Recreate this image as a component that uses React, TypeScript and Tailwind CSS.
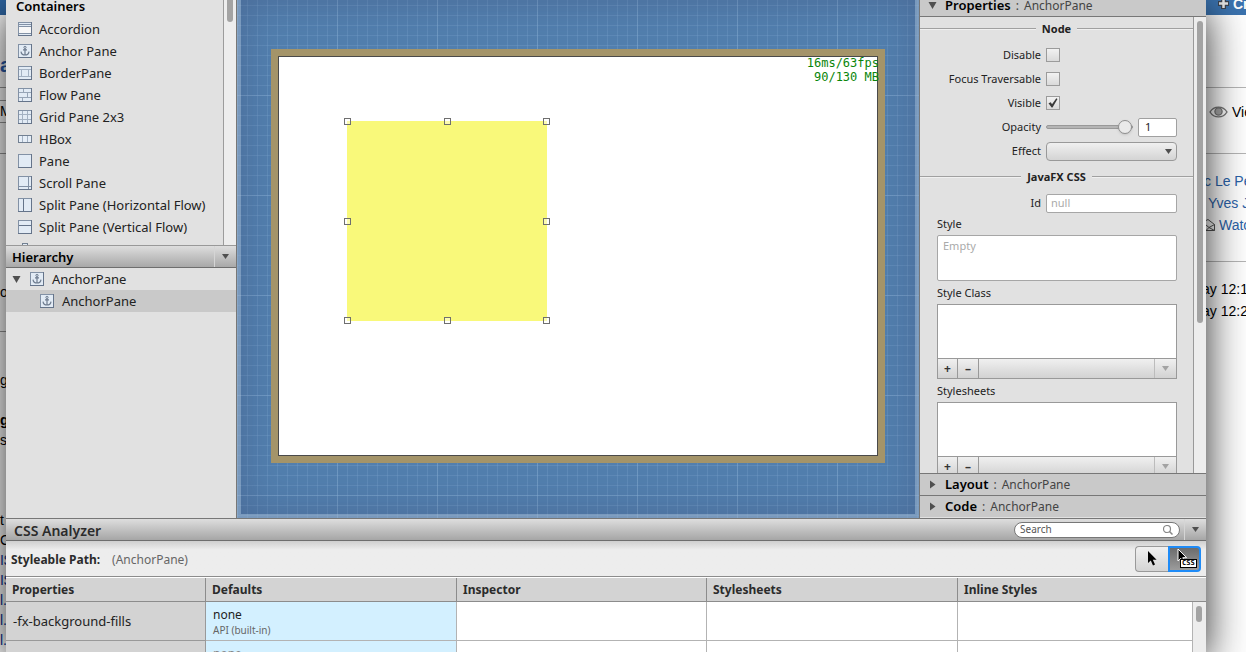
import { useState } from "react";
import type { ReactNode } from "react";

const CONTAINERS: { name: string; icon: string }[] = [
  { name: "Accordion", icon: "accordion" },
  { name: "Anchor Pane", icon: "anchor" },
  { name: "BorderPane", icon: "border" },
  { name: "Flow Pane", icon: "flow" },
  { name: "Grid Pane 2x3", icon: "grid" },
  { name: "HBox", icon: "hbox" },
  { name: "Pane", icon: "pane" },
  { name: "Scroll Pane", icon: "scroll" },
  { name: "Split Pane (Horizontal Flow)", icon: "splith" },
  { name: "Split Pane (Vertical Flow)", icon: "splitv" },
];

function PaneIcon({ kind }: { kind: string }) {
  if (kind === "hbox") {
    return (
      <svg width="14" height="14" viewBox="0 0 14 14" shapeRendering="crispEdges" className="shrink-0">
        <rect x="0.5" y="3.5" width="13" height="7" fill="#e6eef7" stroke="#728092" />
        <path d="M4.5 4v6M9.5 4v6" stroke="#a3b1c2" />
      </svg>
    );
  }
  return (
    <svg width="14" height="14" viewBox="0 0 14 14" shapeRendering="crispEdges" className="shrink-0">
      <rect x="0.5" y="0.5" width="13" height="13" fill="#e2ebf5" stroke="#8291a5" />
      <path d="M0 13.5h14M13.5 0v14" stroke="#65748a" />
      {kind === "accordion" && (
        <g>
          <path d="M1 2.5h12M1 4.5h12M1 11.5h12" stroke="#8291a5" />
          <path d="M1 5h12v6H1z" fill="#f7f7f7" />
        </g>
      )}
      {kind === "anchor" && (
        <g shapeRendering="auto" fill="none" stroke="#6d7b8e">
          <circle cx="7" cy="3.4" r="1.1" />
          <path d="M7 4.5v6.5M5 5.8h4M3 7.6c.3 2.2 1.8 3.4 4 3.4s3.7-1.2 4-3.4" strokeWidth="1.2" />
        </g>
      )}
      {kind === "border" && <path d="M1 3.5h12M1 10.5h12M3.5 4v6M10.5 4v6" stroke="#a3b1c2" />}
      {kind === "flow" && <path d="M1 4.5h12M1 9.5h12M5.5 1v3M9.5 5v4M4.5 10v3" stroke="#97a5b7" />}
      {kind === "grid" && <path d="M1 4.5h12M1 9.5h12M4.5 1v12M9.5 1v12" stroke="#a3b1c2" />}
      {kind === "scroll" && <path d="M1 10.5h12M10.5 1v12" stroke="#8291a5" />}
      {kind === "splith" && <path d="M5.5 1v12" stroke="#65748a" />}
      {kind === "splitv" && <path d="M1 5.5h12" stroke="#65748a" />}
    </svg>
  );
}

function Triangle({ dir = "down" }: { dir?: "down" | "right" }) {
  return (
    <svg width="9" height="9" viewBox="0 0 9 9" className="shrink-0" aria-hidden="true">
      <path d={dir === "down" ? "M0.5 1h8L4.5 8z" : "M2 0.5v8L7.5 4.5z"} fill="#4f4f4f" />
    </svg>
  );
}

function SmallTriangle({ tone = "dark" }: { tone?: "dark" | "light" }) {
  return (
    <svg width="7" height="5" viewBox="0 0 7 5" className="shrink-0" aria-hidden="true">
      <path d="M0 0h7L3.5 5z" fill={tone === "dark" ? "#4f4f4f" : "#a3a3a3"} />
    </svg>
  );
}

function BackdropLeft() {
  return (
    <div className="flex w-1.5 shrink-0 flex-col overflow-hidden bg-white font-['Liberation_Sans'] text-sm leading-5 whitespace-nowrap text-black" aria-hidden="true">
      <div className="h-[15px] shrink-0 bg-[#2f66a3]" />
      <div className="h-[73px] shrink-0 border-b border-[#999] pt-9 text-xl font-bold text-[#2a5db0]">a</div>
      <div className="h-[13px] shrink-0 border-b border-[#999]" />
      <div className="h-[22px] shrink-0 border-b border-[#999]">M</div>
      <div className="h-[31px] shrink-0 border-b border-[#999]" />
      <div className="h-[178px] shrink-0 border-b border-[#999] pt-32">ov</div>
      <div className="mt-[38px]">g</div>
      <div className="mt-5 font-bold">ge</div>
      <div>s</div>
      <div className="mt-[60px]">t</div>
      <div>C</div>
      <div className="text-[#0a2f8f]">I$</div>
      <div className="text-[#0a2f8f]">I$</div>
      <div className="text-[#0a2f8f]">l.</div>
      <div className="text-[#0a2f8f]">l.</div>
      <div className="text-[#0a2f8f]">l.</div>
    </div>
  );
}

function BackdropRight() {
  return (
    <div className="flex w-10 shrink-0 flex-col overflow-hidden bg-white font-['Liberation_Sans'] text-sm leading-[22px] whitespace-nowrap text-[#2b62a8]">
      <div className="flex h-[15px] shrink-0 items-end gap-1 overflow-hidden bg-[#3b73af] pl-3 text-white">
        <svg width="11" height="15" viewBox="0 0 11 15" className="shrink-0">
          <path d="M5.500 -2v11M0 3.500h11" stroke="#3d4450" strokeWidth="5" />
          <path d="M5.500 -2v10M1 3.500h9" stroke="#e8e8e8" strokeWidth="2.500" />
        </svg>
        <span className="font-bold">Cr</span>
      </div>
      <div className="h-[73px] shrink-0 border-b border-[#b5b5b5]" />
      <div className="flex h-[66px] shrink-0 gap-1 border-b border-[#b5b5b5] pt-[13px] pl-[3px] text-black">
        <svg width="19" height="22" viewBox="0 0 19 22" fill="none" className="shrink-0">
          <path d="M1 11c4-6.500 13-6.500 17 0c-4 6.500-13 6.500-17 0z" stroke="#777" strokeWidth="1.400" />
          <circle cx="9.500" cy="10.500" r="3.600" fill="#aaa" stroke="#777" strokeWidth="1.300" />
        </svg>
        <span>Vie</span>
      </div>
      <div className="h-[108px] shrink-0 border-b border-[#b5b5b5] pt-4">
        <div className="-ml-0.5">c Le Pe</div>
        <div className="pl-0.5">Yves J</div>
        <div className="flex gap-1">
          <svg width="9" height="22" viewBox="0 0 9 22" fill="none" stroke="#555" className="shrink-0">
            <path d="M0 6.500L2 5.500L8.500 10.500V16.500H0M0 11l3 2.500l5.500-3M3 13.500l5.500 3M0 16.500l3-3" />
          </svg>
          Watc
        </div>
      </div>
      <div className="-ml-1 pt-4 text-black">
        <div>ay 12:1</div>
        <div>ay 12:2</div>
      </div>
    </div>
  );
}

function Library() {
  return (
    <section className="flex h-[245px] shrink-0">
      <div className="min-w-0 flex-1 overflow-hidden border-r border-[#9c9c9c] pl-3">
        <h2 className="-ml-0.5 h-[18px] text-[13px] leading-3 font-semibold text-black">Containers</h2>
        <ul>
          {CONTAINERS.map((c) => (
            <li key={c.name} className="flex h-[22px] items-center gap-[7px] whitespace-nowrap">
              <PaneIcon kind={c.icon} />
              <span className="pt-0.5">{c.name}</span>
            </li>
          ))}
          <li className="flex h-[22px] justify-start pt-[5px] pl-1">
            <span className="h-2 w-1.5 border border-[#728092] bg-[#e2ebf5]" />
          </li>
        </ul>
      </div>
      <div className="w-3 shrink-0 bg-[#ededed] pl-[3px]">
        <div className="h-[22px] w-1.5 rounded-b-[3px] bg-[#a3a3a3]" />
      </div>
    </section>
  );
}

function Hierarchy() {
  return (
    <section className="flex flex-1 flex-col">
      <header className="flex h-[23px] items-stretch border-y border-t-[#999] border-b-[#6e6e6e] bg-linear-to-b from-[#dedede] to-[#a8a8a8]">
        <h2 className="flex-1 pl-1.5 text-[13px] leading-[22px] font-semibold text-black">Hierarchy</h2>
        <button type="button" aria-label="Hierarchy options" className="flex w-[22px] items-center justify-center border-l border-[#d5d5d5]">
          <SmallTriangle />
        </button>
      </header>
      <ul>
        <li className="flex h-[22px] items-center pl-1.5">
          <Triangle />
          <span className="ml-[9px] flex items-center gap-2">
            <PaneIcon kind="anchor" />
            <span className="pt-0.5">AnchorPane</span>
          </span>
        </li>
        <li className="flex h-[22px] items-center gap-2 bg-[#c9c9c9] pl-[34px]">
          <PaneIcon kind="anchor" />
          <span className="pt-0.5">AnchorPane</span>
        </li>
      </ul>
    </section>
  );
}

function Handle({ place }: { place: string }) {
  return <span className={"absolute size-[7px] border border-[#6f6f6f] bg-white/40 " + place} />;
}

function Canvas() {
  return (
    <main className="relative flex min-w-0 flex-1 items-start justify-center overflow-hidden bg-[#527fae] bg-[linear-gradient(to_right,rgba(150,185,220,.28)_1px,transparent_1px),linear-gradient(to_bottom,rgba(150,185,220,.28)_1px,transparent_1px),linear-gradient(to_right,rgba(130,170,210,.26)_1px,transparent_1px),linear-gradient(to_bottom,rgba(130,170,210,.26)_1px,transparent_1px)] bg-[size:100px_100px,100px_100px,10px_10px,10px_10px] bg-[position:0_95px,0_95px,0_5px,0_5px] pt-[49px]">
      <div className="pointer-events-none absolute inset-0 border-x-4 border-b-4 border-[#9fb4cc]/50 shadow-[inset_0_0_40px_rgba(60,70,110,.35)]" />
      <div className="relative shrink-0 bg-[#a49469] p-[7px]">
        <div className="relative h-[400px] w-[600px] border border-[#4a4a4a] bg-white">
          <div className="absolute top-16 left-17 size-[200px] bg-[#f9f97a]">
            <Handle place="-top-[3px] -left-[3px]" />
            <Handle place="-top-[3px] left-[97px]" />
            <Handle place="-top-[3px] -right-[3px]" />
            <Handle place="top-[97px] -left-[3px]" />
            <Handle place="top-[97px] -right-[3px]" />
            <Handle place="-bottom-[3px] -left-[3px]" />
            <Handle place="-bottom-[3px] left-[97px]" />
            <Handle place="-bottom-[3px] -right-[3px]" />
          </div>
          <pre className="absolute -top-px -right-0.5 text-right font-['DejaVu_Sans_Mono'] text-xs leading-[14px] text-[#0a850a]">{"16ms/63fps\n90/130 MB"}</pre>
        </div>
      </div>
    </main>
  );
}

function GroupTitle({ children }: { children: ReactNode }) {
  return (
    <div className="mb-0.5 flex h-6 items-center gap-1.5">
      <span className="h-0.5 flex-1 border-t border-[#a0a0a0] bg-[#f0f0f0]" />
      <h3 className="text-[11px] font-bold text-[#222]">{children}</h3>
      <span className="h-0.5 flex-1 border-t border-[#a0a0a0] bg-[#f0f0f0]" />
    </div>
  );
}

function Field({ id, label, children }: { id: string; label: string; children: ReactNode }) {
  return (
    <div className="flex h-6 items-center gap-[5px] pr-4">
      <label htmlFor={id} className="w-[121px] shrink-0 text-right">
        {label}
      </label>
      {children}
    </div>
  );
}

function Check({ id, checked, onChange }: { id: string; checked: boolean; onChange: (v: boolean) => void }) {
  return (
    <span className="grid place-items-center">
      <input
        id={id}
        type="checkbox"
        checked={checked}
        onChange={(e) => onChange(e.target.checked)}
        className="col-start-1 row-start-1 size-3.5 appearance-none border border-[#9b9b9b] bg-linear-to-b from-[#f2f2f2] to-[#dadada]"
      />
      {checked && (
        <svg width="10" height="10" viewBox="0 0 10 10" className="pointer-events-none col-start-1 row-start-1">
          <path d="M0.5 5.2L2.8 4.2L4 6.3L8.3 0.3L9.5 1L4.5 9.5H3.6z" fill="#3a3a3a" />
        </svg>
      )}
    </span>
  );
}

function ListEditor({ label }: { label: string }) {
  return (
    <div>
      <h4 className="leading-[22px]">{label}</h4>
      <div className="border border-[#999]">
        <ul className="h-[53px] bg-white" aria-label={label} />
        <div className="flex h-5 border-t border-[#999] bg-linear-to-b from-[#f0f0f0] to-[#d2d2d2] text-xs leading-[18px] font-bold text-[#333]">
          <button type="button" aria-label={"Add to " + label} className="w-5 border-r border-[#999]">
            +
          </button>
          <button type="button" aria-label={"Remove from " + label} className="w-[21px] border-r border-[#999]">
            –
          </button>
          <span className="flex-1" />
          <button type="button" aria-label={label + " menu"} className="flex w-[22px] items-center justify-center border-l border-[#bcbcbc]">
            <SmallTriangle tone="light" />
          </button>
        </div>
      </div>
    </div>
  );
}

function SectionHeader({ title, open }: { title: string; open?: boolean }) {
  return (
    <button type="button" aria-expanded={!!open} className="flex h-[22px] w-full shrink-0 items-center gap-2 border-t border-[#777] bg-[#c9c9c9] pl-2 text-xs">
      <Triangle dir={open ? "down" : "right"} />
      <span className="flex items-baseline gap-[5px] pt-px text-[#444]">
        <b className="text-[13px] font-semibold text-black">{title}</b>
        <span>:</span>
        <span>AnchorPane</span>
      </span>
    </button>
  );
}

function Inspector() {
  const [disable, setDisable] = useState(false);
  const [focus, setFocus] = useState(false);
  const [visible, setVisible] = useState(true);
  const [opacity, setOpacity] = useState(1);
  return (
    <aside className="flex w-[287px] shrink-0 flex-col border-l border-[#777] pb-px text-[11px] text-[#222]">
      <div className="flex h-[17px] shrink-0 flex-col justify-end overflow-hidden border-b border-[#777] bg-[#c9c9c9]">
        <SectionHeader title="Properties" open />
      </div>
      <div className="flex min-h-0 flex-1">
        <div className="min-w-0 flex-1 overflow-hidden border-r border-[#999]">
          <GroupTitle>Node</GroupTitle>
          <Field id="disable" label="Disable">
            <Check id="disable" checked={disable} onChange={setDisable} />
          </Field>
          <Field id="focus" label="Focus Traversable">
            <Check id="focus" checked={focus} onChange={setFocus} />
          </Field>
          <Field id="visible" label="Visible">
            <Check id="visible" checked={visible} onChange={setVisible} />
          </Field>
          <Field id="opacity" label="Opacity">
            <input
              id="opacity"
              type="range"
              min="0"
              max="1"
              step="0.1"
              value={opacity}
              onChange={(e) => setOpacity(Number(e.target.value))}
              className="h-4 min-w-0 flex-1 appearance-none bg-transparent [&::-webkit-slider-runnable-track]:h-1 [&::-webkit-slider-runnable-track]:rounded-sm [&::-webkit-slider-runnable-track]:border [&::-webkit-slider-runnable-track]:border-[#999] [&::-webkit-slider-runnable-track]:bg-[#b5b5b5] [&::-webkit-slider-thumb]:-mt-[6px] [&::-webkit-slider-thumb]:size-3.5 [&::-webkit-slider-thumb]:appearance-none [&::-webkit-slider-thumb]:rounded-full [&::-webkit-slider-thumb]:border [&::-webkit-slider-thumb]:border-[#8f8f8f] [&::-webkit-slider-thumb]:bg-[#eaeaea] [&::-webkit-slider-thumb]:shadow-sm"
            />
            <input
              type="text"
              aria-label="Opacity value"
              value={String(opacity)}
              onChange={(e) => setOpacity(Number(e.target.value) || 0)}
              className="h-[19px] w-[39px] rounded-xs border border-[#a0a0a0] bg-white px-1.5 pb-0.5"
            />
          </Field>
          <Field id="effect" label="Effect">
            <span className="grid min-w-0 flex-1 items-center">
              <select id="effect" className="col-start-1 row-start-1 h-[19px] w-full appearance-none rounded-sm border border-[#999] bg-linear-to-b from-[#f0f0f0] to-[#d4d4d4]">
                <option value="" />
              </select>
              <span className="pointer-events-none col-start-1 row-start-1 justify-self-end pr-[5px]">
                <SmallTriangle />
              </span>
            </span>
          </Field>
          <div className="h-0.5" />
          <GroupTitle>JavaFX CSS</GroupTitle>
          <Field id="node-id" label="Id">
            <input id="node-id" type="text" placeholder="null" className="h-[19px] min-w-0 flex-1 rounded-xs border border-[#a6a6a6] bg-white px-1 pb-0.5 placeholder:text-[#aaa]" />
          </Field>
          <div className="-mt-0.5 pr-4 pl-[17px]">
            <label htmlFor="style" className="block leading-[22px]">
              Style
            </label>
            <textarea id="style" placeholder="Empty" className="block h-[46px] w-full resize-none rounded-xs border border-[#a6a6a6] bg-white px-[5px] py-0.5 leading-4 placeholder:text-[#aaa]" />
            <div className="h-px" />
            <ListEditor label="Style Class" />
            <div className="h-px" />
            <ListEditor label="Stylesheets" />
          </div>
        </div>
        <div className="w-3 shrink-0 bg-[#ededed] pt-1 pl-[3px]">
          <div className="h-[302px] w-1.5 rounded-full bg-[#a3a3a3]" />
        </div>
      </div>
      <SectionHeader title="Layout" />
      <SectionHeader title="Code" />
    </aside>
  );
}

function ArrowPointer({ outlined }: { outlined?: boolean }) {
  return (
    <svg width="12" height="17" viewBox="0 0 12 17" aria-hidden="true">
      <path
        d="M2 1v12l2.8-2.6L7 15.5l2-0.9L6.8 9.7H10.6z"
        fill="#000"
        stroke={outlined ? "#fff" : "none"}
        strokeWidth="1"
      />
    </svg>
  );
}

function CssAnalyzer() {
  const blank = "border-r border-b border-[#b3b3b3] bg-white";
  return (
    <section className="shrink-0 border-t border-[#777]">
      <header className="flex h-[22px] items-center border-b border-[#6e6e6e] bg-linear-to-b from-[#dedede] to-[#a6a6a6]">
        <h2 className="flex-1 pt-0.5 pl-2 text-sm leading-5 font-semibold text-[#2b2b2b]">CSS Analyzer</h2>
        <div className="mr-1 flex h-4 w-[166px] items-center rounded-full border border-[#777] bg-white pr-1.5 pl-[5px] text-[10px]">
          <input type="text" aria-label="Search" placeholder="Search" className="min-w-0 flex-1 placeholder:text-[#555]" />
          <svg width="10" height="10" viewBox="0 0 10 10" fill="none" stroke="#888" aria-hidden="true">
            <circle cx="4" cy="4" r="3.5" strokeWidth="1.2" />
            <path d="M6.5 6.5l3 3" strokeWidth="1.5" />
          </svg>
        </div>
        <button type="button" aria-label="CSS Analyzer options" className="flex w-[22px] items-center justify-center self-stretch border-l border-[#d5d5d5]">
          <SmallTriangle />
        </button>
      </header>
      <div className="flex h-9 items-center border-b border-[#8c8c8c] bg-[#ededed] bg-linear-to-b from-[#cfcfcf] to-[#ededed] to-25% pr-[5px] pl-[5px]">
        <span className="pt-0.5 text-xs font-bold text-[#2b2b2b]">Styleable Path:</span>
        <span className="ml-3 flex-1 pt-0.5 text-xs text-[#666]">(AnchorPane)</span>
        <button type="button" aria-label="Pick mode" className="flex h-[26px] w-[33px] items-center justify-center rounded-l-sm border border-r-0 border-[#999] bg-linear-to-b from-[#f0f0f0] to-[#d4d4d4]">
          <ArrowPointer />
        </button>
        <button type="button" aria-label="CSS pick mode" aria-pressed="true" className="relative flex h-[26px] w-[33px] rounded-r-sm border-2 border-[#1e8bf7] bg-linear-to-b from-[#6c6c6c] to-[#9c9c9c] pl-1.5">
          <ArrowPointer outlined />
          <span className="absolute top-[11px] left-2.5 border border-black bg-white px-px font-['DejaVu_Sans_Mono'] text-[7px] leading-[7px] font-bold text-black">CSS</span>
        </button>
      </div>
      <table className="w-full table-fixed border-separate border-spacing-0 border-t border-white text-left">
        <colgroup>
          <col className="w-[200px]" />
          <col className="w-[251px]" />
          <col className="w-[250px]" />
          <col className="w-[251px]" />
          <col />
          <col className="w-[13px]" />
        </colgroup>
        <thead>
          <tr className="h-6 bg-[#d3d3d3] text-xs leading-4 text-[#2b2b2b]">
            <th className="border-r border-b border-[#8c8c8c] pl-1.5 font-bold">Properties</th>
            <th className="border-r border-b border-[#8c8c8c] pl-1.5 font-bold">Defaults</th>
            <th className="border-r border-b border-[#8c8c8c] pl-1.5 font-bold">Inspector</th>
            <th className="border-r border-b border-[#8c8c8c] pl-1.5 font-bold">Stylesheets</th>
            <th colSpan={2} className="border-b border-[#8c8c8c] pl-1.5 font-bold">
              Inline Styles
            </th>
          </tr>
        </thead>
        <tbody>
          <tr className="h-[39px]">
            <td className="border-r border-b border-[#999] bg-[#d3d3d3] pt-0.5 pl-[7px] text-[13px]">-fx-background-fills</td>
            <td className="border-r border-b border-[#b3b3b3] bg-[#d3f0ff] pt-0.5 pl-[7px]">
              <div className="text-xs leading-4">none</div>
              <div className="text-[10px] leading-[14px] text-[#666]">API (built-in)</div>
            </td>
            <td className={blank} />
            <td className={blank} />
            <td className={blank} />
            <td rowSpan={2} className="bg-[#ededed] pt-1 pl-[3px] align-top">
              <div className="h-4 w-1.5 rounded-full bg-[#a3a3a3]" />
            </td>
          </tr>
          <tr className="h-[39px]">
            <td className="border-r border-b border-[#999] bg-[#d3d3d3]" />
            <td className="border-r border-b border-[#b3b3b3] bg-[#d3f0ff] pt-0.5 pl-[7px]">
              <div className="text-xs leading-4 text-[#888]">none</div>
              <div className="text-[10px] leading-[14px] text-[#666]">API (built-in)</div>
            </td>
            <td className={blank} />
            <td className={blank} />
            <td className={blank} />
          </tr>
        </tbody>
      </table>
    </section>
  );
}

export default function App() {
  return (
    <div className="flex h-screen overflow-hidden bg-white font-['Noto_Sans',sans-serif] text-[13px] text-[#222]">
      <BackdropLeft />
      <div className="relative flex min-w-0 flex-1 flex-col bg-[#e1e1e1] shadow-[0_10px_40px_rgba(0,0,0,.85)]">
        <div className="flex min-h-0 flex-1">
          <div className="flex w-[231px] shrink-0 flex-col border-r border-[#777]">
            <Library />
            <Hierarchy />
          </div>
          <Canvas />
          <Inspector />
        </div>
        <div className="h-[134px] shrink-0 overflow-hidden">
          <CssAnalyzer />
        </div>
      </div>
      <BackdropRight />
    </div>
  );
}
